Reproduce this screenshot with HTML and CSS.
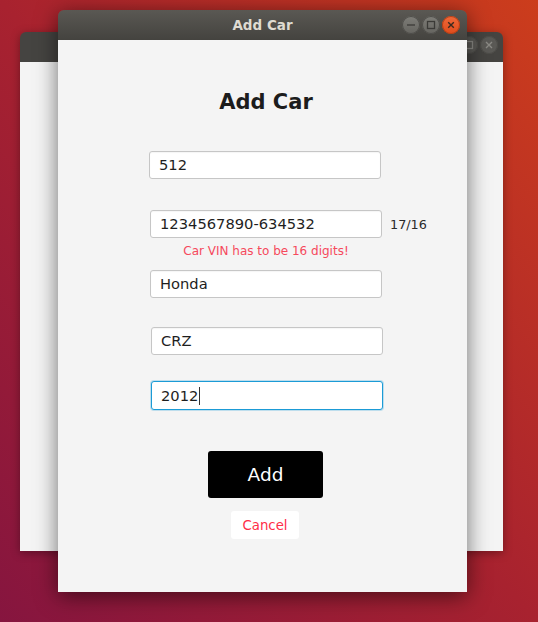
FILE: index.html
```html
<!DOCTYPE html>
<html>
<head>
<meta charset="utf-8">
<link rel="stylesheet" href="styles.css">
</head>
<body>
<div class="desktop">
  <div class="window back">
    <div class="titlebar back-bar">
      <div class="controls">
        <span class="wbtn dim"><svg viewBox="0 0 18 18"><rect x="5.5" y="5.5" width="7" height="7" fill="none" stroke="#8b8a85" stroke-width="1.3"/></svg></span>
        <span class="wbtn dim"><svg viewBox="0 0 18 18"><path d="M6 6 L12 12 M12 6 L6 12" stroke="#8b8a85" stroke-width="1.4"/></svg></span>
      </div>
    </div>
    <div class="back-body"></div>
  </div>

  <div class="window front">
    <div class="titlebar">
      <span class="title">Add Car</span>
      <div class="controls">
        <span class="wbtn"><svg viewBox="0 0 18 18"><path d="M5 9 H13" stroke="#3b3a37" stroke-width="1.3"/></svg></span>
        <span class="wbtn"><svg viewBox="0 0 18 18"><rect x="5.5" y="5.5" width="7" height="7" fill="none" stroke="#3b3a37" stroke-width="1.3"/></svg></span>
        <span class="wbtn close"><svg viewBox="0 0 18 18"><path d="M6.2 6.2 L11.8 11.8 M11.8 6.2 L6.2 11.8" stroke="#3a2a20" stroke-width="1.4"/></svg></span>
      </div>
    </div>
    <div class="content">
      <div class="form">
        <h1 class="heading">Add Car</h1>
        <div class="field f1">512</div>
        <div class="row">
          <div class="field f2">1234567890-634532</div>
          <span class="counter">17/16</span>
        </div>
        <div class="error">Car VIN has to be 16 digits!</div>
        <div class="field f3">Honda</div>
        <div class="field f4">CRZ</div>
        <div class="field f5 focused">2012<span class="caret"></span></div>
        <button class="add">Add</button>
        <button class="cancel">Cancel</button>
      </div>
    </div>
  </div>
</div>
</body>
</html>
```

FILE: styles.css
```css
html, body {
  margin: 0;
  padding: 0;
}
body {
  width: 538px;
  height: 622px;
  overflow: hidden;
  font-family: "DejaVu Sans", sans-serif;
}
.desktop {
  position: relative;
  width: 538px;
  height: 622px;
  background: linear-gradient(to top right, #86153f 0%, #a8222f 50%, #cc3d1c 100%);
  overflow: hidden;
}
.window {
  position: absolute;
  display: flex;
  flex-direction: column;
  border-radius: 6px 6px 0 0;
}
.back {
  left: 20px;
  top: 32px;
  width: 483px;
  height: 519px;
  box-shadow: 0 2px 10px rgba(0,0,0,0.35);
}
.front {
  left: 58px;
  top: 10px;
  width: 409px;
  height: 582px;
  box-shadow: 0 4px 22px rgba(0,0,0,0.55);
}
.titlebar {
  height: 30px;
  flex: none;
  display: flex;
  align-items: center;
  justify-content: center;
  position: relative;
  border-radius: 6px 6px 0 0;
  background: linear-gradient(#5a5853, #44433f);
}
.back-bar {
  background: #454441;
}
.title {
  color: #dfdbd2;
  font-weight: bold;
  font-size: 13.5px;
}
.controls {
  position: absolute;
  right: 7px;
  top: 6px;
  display: flex;
  gap: 2px;
}
.wbtn {
  width: 18px;
  height: 18px;
  border-radius: 50%;
  background: linear-gradient(#7e7d78, #65645f);
  box-shadow: inset 0 0 0 1px #4e4d49;
  display: block;
}
.wbtn svg {
  width: 18px;
  height: 18px;
  display: block;
}
.wbtn.close {
  background: linear-gradient(#f0693a, #df4c1c);
  box-shadow: inset 0 0 0 1px #b53f16;
}
.wbtn.dim {
  background: #5a5955;
  box-shadow: inset 0 0 0 1px #4c4b47;
}
.back .controls {
  top: 4px;
  right: 5px;
}
.back-body {
  flex: 1;
  background: #f4f4f4;
}
.content {
  flex: 1;
  background: #f4f4f4;
}
.form {
  width: 232px;
  margin-left: 92px;
  display: flex;
  flex-direction: column;
  align-items: flex-start;
}
.heading {
  margin: 50px 0 0 0;
  align-self: center;
  font-size: 21px;
  line-height: 24px;
  font-weight: bold;
  color: #1c1c1c;
}
.field {
  flex: none;
  box-sizing: border-box;
  width: 232px;
  height: 28px;
  border: 1px solid #c6c6c6;
  border-radius: 3px;
  background: #ffffff;
  box-shadow: inset 0 1px 1px rgba(0,0,0,0.04);
  padding-left: 9px;
  font-size: 14.7px;
  line-height: 26px;
  color: #1e1e1e;
  white-space: nowrap;
}
.f1 { margin-top: 37px; margin-left: -1px; }
.row {
  display: flex;
  align-items: center;
  gap: 8px;
  margin-top: 31px;
  white-space: nowrap;
}
.counter {
  font-size: 12.8px;
  color: #2a2a2a;
}
.error {
  align-self: stretch;
  text-align: center;
  margin-top: 6px;
  font-size: 12px;
  line-height: 14px;
  color: #f6495c;
  white-space: nowrap;
}
.f3 { margin-top: 12px; }
.f4 { margin-top: 29px; margin-left: 1px; }
.f5 { margin-top: 26px; margin-left: 1px; height: 29px; }
.focused {
  border: 1px solid #1b9bd6;
  box-shadow: 0 0 0 1px rgba(27,155,214,0.25);
  line-height: 27px;
}
.caret {
  display: inline-block;
  width: 1px;
  height: 18px;
  background: #333;
  vertical-align: -4px;
  margin-left: 1px;
}
.add {
  margin: 41px 0 0 58px;
  width: 115px;
  height: 47px;
  border: none;
  border-radius: 3px;
  background: #000;
  color: #fff;
  font-family: "DejaVu Sans", sans-serif;
  font-size: 18.5px;
  padding: 0;
}
.cancel {
  margin: 13px 0 0 81px;
  width: 68px;
  height: 28px;
  border: none;
  border-radius: 3px;
  background: #fff;
  color: #ff2d47;
  font-family: "DejaVu Sans", sans-serif;
  font-size: 13.3px;
  padding: 0;
}
```
